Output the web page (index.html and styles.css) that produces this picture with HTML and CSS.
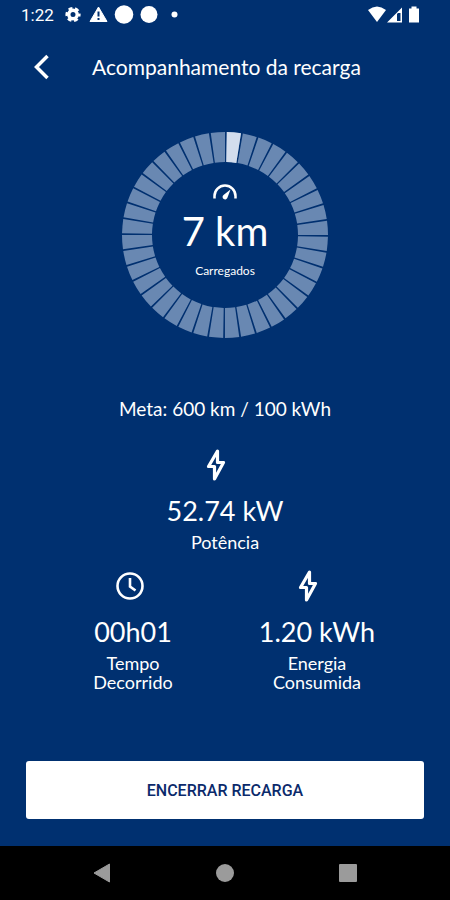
FILE: index.html
```html
<!DOCTYPE html>
<html lang="pt-BR">
<head>
  <meta charset="UTF-8" />
  <meta name="viewport" content="width=device-width, initial-scale=1" />
  <title>Acompanhamento da recarga</title>
  <link rel="stylesheet" href="styles.css">
</head>
<body>
  <svg class="sprite" aria-hidden="true">
    <symbol id="bolt" viewBox="0 0 24 36">
      <path d="M13.500 4 L4.500 19.500 H10.500 V32 L19.500 15.500 H13.500 Z" fill="none" stroke="currentColor" stroke-width="3.200" stroke-linejoin="round" />
    </symbol>
  </svg>

  <div class="status-bar">
    <span class="time">1:22</span>
    <svg class="status-left" width="114" height="20" viewBox="0 0 114 20" fill="currentColor" aria-hidden="true">
      <circle cx="8" cy="9.500" r="4.200" fill="none" stroke="currentColor" stroke-width="3.400" />
      <circle cx="8" cy="9.500" r="6.200" fill="none" stroke="currentColor" stroke-width="2.800" stroke-dasharray="3.800 2.690" stroke-dashoffset="1.900" />
      <path d="M33.500 2 L42 16.500 H25 Z" stroke="currentColor" stroke-linejoin="round" />
      <path class="mark" d="M32.500 6.500 h2 v5 h-2 z M32.500 13 h2 v2 h-2 z" />
      <circle cx="59" cy="9.500" r="9.300" />
      <circle cx="84" cy="9.500" r="8.500" />
      <circle cx="109.500" cy="9.500" r="3" />
    </svg>
    <svg class="status-right" width="52" height="18" viewBox="0 0 52 18" fill="currentColor" aria-hidden="true">
      <path d="M0 4 Q9 -3 18 4 L9 16 Z" />
      <path fill-rule="evenodd" d="M19 16.500 L34 1.500 V16.500 Z M29 8 V15 H32.500 V7 H30 Z" />
      <path d="M41 2.500 H43.500 V0.500 H48.500 V2.500 H51 V16.500 H41 Z" />
    </svg>
  </div>

  <header class="top-bar">
    <button type="button" class="back" aria-label="Voltar">
      <svg width="20" height="28" viewBox="0 0 20 28" aria-hidden="true">
        <path d="M15.500 3 L4.500 14 L15.500 25" fill="none" stroke="currentColor" stroke-width="3.500" />
      </svg>
    </button>
    <h1>Acompanhamento da recarga</h1>
  </header>

  <main>
    <div class="gauge">
      <svg class="ring" viewBox="0 0 206 206" aria-hidden="true">
        <circle class="track" cx="103" cy="103" r="88" pathLength="360" />
        <circle class="progress" cx="103" cy="103" r="88" pathLength="360" />
      </svg>
      <div class="gauge-info">
        <svg width="26" height="18" viewBox="0 0 26 18" aria-hidden="true">
          <path d="M2.500 15.500 V13 A10.500 10.500 0 0 1 23.500 13 V15.500" fill="none" stroke="currentColor" stroke-width="2.500" />
          <path d="M18.500 6.500 L15.500 14.500 A2.500 2.500 0 1 1 11.500 12 Z" fill="currentColor" />
        </svg>
        <strong class="distance">7 km</strong>
        <span class="caption">Carregados</span>
      </div>
    </div>

    <p class="goal">Meta: 600 km / 100 kWh</p>

    <section class="metric power">
      <svg class="icon" width="24" height="36" aria-hidden="true"><use href="#bolt" /></svg>
      <p class="value">52.74 kW</p>
      <p class="label">Potência</p>
    </section>

    <div class="metrics">
      <section class="metric">
        <svg class="icon clock" width="30" height="36" viewBox="0 0 30 36" aria-hidden="true">
          <circle cx="15" cy="18" r="12.500" fill="none" stroke="currentColor" stroke-width="2.600" />
          <path d="M15 10 V18.500 L20.500 22.500" fill="none" stroke="currentColor" stroke-width="2.600" />
        </svg>
        <p class="value">00h01</p>
        <p class="label">Tempo<br>Decorrido</p>
      </section>
      <section class="metric">
        <svg class="icon" width="24" height="36" aria-hidden="true"><use href="#bolt" /></svg>
        <p class="value">1.20 kWh</p>
        <p class="label">Energia<br>Consumida</p>
      </section>
    </div>

    <button type="button" class="stop">Encerrar recarga</button>
  </main>

  <nav class="nav-bar">
    <button type="button" aria-label="Voltar">
      <svg width="20" height="20" viewBox="0 0 20 20"><path d="M2 10 L17.500 1 V19 Z" fill="currentColor" stroke="currentColor" stroke-linejoin="round" /></svg>
    </button>
    <button type="button" aria-label="Início">
      <svg width="20" height="20" viewBox="0 0 20 20"><circle cx="10" cy="10" r="9" fill="currentColor" /></svg>
    </button>
    <button type="button" aria-label="Recentes">
      <svg width="20" height="20" viewBox="0 0 20 20"><rect x="1" y="1" width="18" height="18" rx="1" fill="currentColor" /></svg>
    </button>
  </nav>
</body>
</html>
```

FILE: styles.css
```css
* {
  box-sizing: border-box;
}
body {
  margin: 0;
  min-height: 100vh;
  display: flex;
  flex-direction: column;
  background: #003070;
  color: #fff;
  font-family: Lato, sans-serif;
}
h1,
p {
  margin: 0;
  font-weight: 400;
}
svg {
  display: block;
  flex-shrink: 0;
}
button {
  border: none;
  padding: 0;
  cursor: pointer;
}
.sprite {
  position: absolute;
  width: 0;
  height: 0;
}
.status-bar {
  display: flex;
  align-items: center;
  height: 30px;
  padding: 0 30px 0 21px;
}
.time {
  width: 44px;
  font-family: Roboto, sans-serif;
  font-size: 17px;
  line-height: 30px;
}
.mark {
  fill: #003070;
}
.status-right {
  margin-left: auto;
}
.top-bar {
  display: flex;
  align-items: center;
  height: 74px;
  padding-left: 32px;
}
.back {
  display: flex;
  align-items: center;
  width: 60px;
  height: 48px;
  background: none;
  color: #fff;
}
h1 {
  font-size: 21px;
  line-height: 28px;
}
main {
  flex: 1;
  display: flex;
  flex-direction: column;
  padding: 28px 26px 27px;
}
.gauge {
  display: grid;
  place-items: center;
  width: 206px;
  margin: 0 auto;
}
.ring,
.gauge-info {
  grid-area: 1 / 1;
}
.ring {
  width: 100%;
  transform: rotate(-89deg);
}
.ring circle {
  fill: none;
  stroke-width: 30;
}
.track {
  stroke: #6988b2;
  stroke-dasharray: 8 1;
}
.progress {
  stroke: #d3dded;
  stroke-dasharray: 8 352;
}
.gauge-info {
  display: flex;
  flex-direction: column;
  align-items: center;
  padding-bottom: 6px;
}
.distance {
  font-size: 40px;
  font-weight: 400;
  line-height: 60px;
}
.caption {
  font-size: 12px;
  line-height: 20px;
}
.goal {
  margin-top: 57px;
  font-size: 19px;
  line-height: 28px;
  text-align: center;
}
.metric {
  display: flex;
  flex-direction: column;
  align-items: center;
  text-align: center;
}
.power {
  margin-top: 24px;
}
.icon {
  margin-right: 18px;
}
.clock {
  margin-right: 6px;
}
.value {
  margin-top: 8px;
  font-size: 27px;
  line-height: 40px;
}
.label {
  margin-top: 2px;
  font-size: 18px;
  line-height: 19px;
}
.metrics {
  display: grid;
  grid-template-columns: 1fr 1fr;
  margin-top: 16px;
  padding: 0 15px;
}
.stop {
  height: 58px;
  margin-top: auto;
  border-radius: 3px;
  background: #fff;
  color: #0b2a6b;
  font-family: Roboto, sans-serif;
  font-size: 16px;
  font-weight: 500;
  text-transform: uppercase;
}
.nav-bar {
  display: flex;
  justify-content: center;
  gap: 75px;
  height: 54px;
  background: #000;
}
.nav-bar button {
  display: grid;
  place-items: center;
  width: 48px;
  background: none;
  color: #9b9b9b;
}
```
